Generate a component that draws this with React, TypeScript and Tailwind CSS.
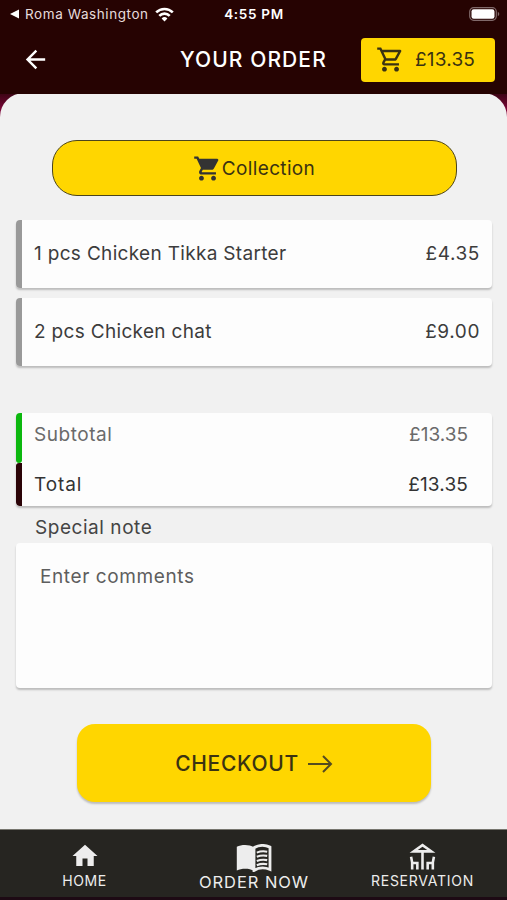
import { MdArrowBack, MdHome, MdOutlineDeck, MdOutlineShoppingCart, MdShoppingCart } from 'react-icons/md';

interface OrderItem {
  name: string;
  qty: number;
  price: string;
}

const items: OrderItem[] = [
  { name: 'Chicken Tikka Starter', qty: 1, price: '£4.35' },
  { name: 'Chicken chat', qty: 2, price: '£9.00' }
];

function StatusBar() {
  return (
    <div className="grid h-7 grid-cols-[1fr_auto_1fr] items-center pl-[10px] pr-[7px] text-[13.5px] text-white">
      <div className="flex items-center">
        <svg width="10" height="10" viewBox="0 0 10 10" fill="currentColor">
          <path d="M0 5 9 .5v9z" />
        </svg>
        <span className="ml-[5px] whitespace-nowrap tracking-[0.58px] text-[#e6dcdc]">Roma Washington</span>
        <svg className="ml-[6px] shrink-0" width="19" height="15" viewBox="0 0 19 15" fill="none" stroke="currentColor" strokeWidth="2.6">
          <path d="M1.2 5.4a11.8 11.8 0 0 1 16.6 0" />
          <path d="M4.3 8.8a7.4 7.4 0 0 1 10.4 0" />
          <path d="M9.5 14.5 6.6 11.4a4.2 4.2 0 0 1 5.8 0z" fill="currentColor" stroke="none" />
        </svg>
      </div>
      <span className="-ml-0.5 font-semibold tracking-[0.7px]">4:55 PM</span>
      <svg className="justify-self-end" width="31" height="14" viewBox="0 0 31 14">
        <rect x=".7" y=".7" width="26.6" height="12.6" rx="4" fill="none" stroke="#80696a" strokeWidth="1.2" />
        <rect x="2.5" y="2.3" width="23" height="9.4" rx="2.2" fill="#fff" />
        <path d="M28.8 4.8c2 .8 2 3.600 0 4.400z" fill="#80696a" />
      </svg>
    </div>
  );
}

function Header() {
  return (
    <header className="z-10 h-[94px] bg-[#260302]">
      <StatusBar />
      <div className="flex h-[63px] items-center pl-[21px] pr-3">
        <MdArrowBack className="h-[29px] w-[29px] text-white" />
        <h1 className="ml-[130px] flex-1 whitespace-nowrap text-[21px] font-medium leading-7 tracking-[1.1px] text-white">YOUR ORDER</h1>
        <button className="flex h-11 w-[134px] shrink-0 items-center rounded-[4px] bg-[#ffd600] pl-[15px] text-[#3a3212]">
          <MdOutlineShoppingCart className="h-[29px] w-[29px]" />
          <span className="ml-[10px] pt-0.5 text-[19px] tracking-[0.2px]">£13.35</span>
        </button>
      </div>
    </header>
  );
}

function ItemRow({ item }: { item: OrderItem }) {
  return (
    <div className="flex h-[68px] items-center overflow-hidden rounded-[4px] bg-[#fdfdfd] pr-3 text-[19px] text-[#3c3c3c] shadow-[0_2px_2px_rgba(0,0,0,0.22)]">
      <div className="h-full w-[6px] bg-[#999]" />
      <span className="ml-3 flex-1 tracking-[0.32px]">
        {item.qty} pcs {item.name}
      </span>
      <span className="tracking-[0.6px]">{item.price}</span>
    </div>
  );
}

function Totals() {
  return (
    <div className="mt-[47px] overflow-hidden rounded-[4px] bg-[#fdfdfd] text-[19px] shadow-[0_2px_2px_rgba(0,0,0,0.22)]">
      <div className="flex h-[50px] pr-6 text-[#6a6a6a]">
        <div className="w-[6px] rounded-b-[3px] bg-[#0cb80f]" />
        <span className="ml-3 mt-2 flex-1 tracking-[0.55px]">Subtotal</span>
        <span className="mt-2">£13.35</span>
      </div>
      <div className="flex h-[43px] pr-6 text-[#333]">
        <div className="w-[6px] rounded-l-[3px] bg-[#2b0307]" />
        <span className="ml-3 mt-2 flex-1 tracking-[0.9px]">Total</span>
        <span className="mt-2 tracking-[0.15px]">£13.35</span>
      </div>
    </div>
  );
}

function MenuIcon() {
  return (
    <svg width="36" height="28" viewBox="0 0 36 28">
      <path d="M.8 2.800C5.500.4 13 .2 18 3.200v23.600C13 24 5.500 24.200.8 26.600z" fill="currentColor" />
      <path
        d="M18 3.700c4.500-2.600 11-2.800 16-.6v22.400c-5-2-11.500-1.800-16 1z"
        fill="none"
        stroke="currentColor"
        strokeWidth="2.800"
      />
      <path
        d="M20.800 8.600c3.400-1.400 6.800-1.600 10.400-.9M20.800 12.800c3.400-1.400 6.800-1.600 10.400-.9M20.800 17c3.400-1.400 6.800-1.600 10.400-.9M20.800 21.200c3.400-1.400 6.800-1.600 10.400-.9"
        fill="none"
        stroke="currentColor"
        strokeWidth="2.100"
      />
    </svg>
  );
}

function BottomNav() {
  return (
    <nav className="h-[71px] border-b-[3px] border-[#1d0a14] bg-[#262521] text-[#ededed]">
      <div className="grid h-full grid-cols-3 justify-items-center border-t border-[#77766f]">
        <div className="flex flex-col items-center pt-[11px]">
          <MdHome className="ml-px h-[30px] w-[30px]" />
          <span className="text-[14px] leading-5 tracking-[0.6px]">HOME</span>
        </div>
        <div className="flex flex-col items-center pt-[14px]">
          <MenuIcon />
          <span className="-mt-px ml-px text-[16.500px] leading-[22px] tracking-[0.95px]">ORDER NOW</span>
        </div>
        <div className="flex flex-col items-center pt-[11px]">
          <MdOutlineDeck className="h-[31px] w-[31px]" />
          <span className="-mt-px text-[14px] leading-5 tracking-[0.75px]">RESERVATION</span>
        </div>
      </div>
    </nav>
  );
}

export default function App() {
  return (
    <div className="flex h-[900px] w-[507px] flex-col overflow-hidden bg-[#6a0630] font-[Inter,sans-serif]">
      <Header />
      <div className="-mt-px flex flex-1 flex-col bg-linear-to-b from-[#3a0413] to-[#7a0638] to-[16px]">
        <main className="flex-1 rounded-t-[24px] bg-[#f1f1f1] pl-4 pr-[15px] pt-[47px]">
          <button className="mx-auto flex h-[56px] w-[405px] items-center justify-center rounded-[25px] border border-[#4c451c] bg-[#ffd600] text-[19px] tracking-[0.35px] text-[#3a3212]">
            <MdShoppingCart className="h-[29px] w-[29px] text-[#333]" />
            <span className="pt-0.5">Collection</span>
          </button>

          <div className="mt-6 flex flex-col gap-[10px]">
            {items.map((item) => (
              <ItemRow key={item.name} item={item} />
            ))}
          </div>

          <Totals />

          <label htmlFor="note" className="ml-[19px] block h-[37px] pt-2 text-[19px] tracking-[0.55px] text-[#444]">
            Special note
          </label>
          <textarea
            id="note"
            placeholder="Enter comments"
            className="block h-[145px] w-full resize-none rounded-[4px] bg-[#fdfdfd] px-6 pt-5 text-[19px] tracking-[0.6px] placeholder-[#5e5e5e] shadow-[0_2px_2px_rgba(0,0,0,0.22)]"
          />

          <button className="mx-auto mt-[36px] flex h-[78px] w-[354px] items-center justify-center rounded-[18px] bg-[#ffd600] pt-0.5 text-[21px] font-medium tracking-[0.7px] text-[#3a3212] shadow-[0_2px_2px_rgba(0,0,0,0.22)]">
            CHECKOUT
            <svg className="ml-[8px]" width="26" height="18" viewBox="0 0 26 18" fill="none" stroke="#554c20" strokeWidth="2">
              <path d="M1 9h23M16 1l8 8-8 8" />
            </svg>
          </button>
        </main>
      </div>
      <BottomNav />
    </div>
  );
}
